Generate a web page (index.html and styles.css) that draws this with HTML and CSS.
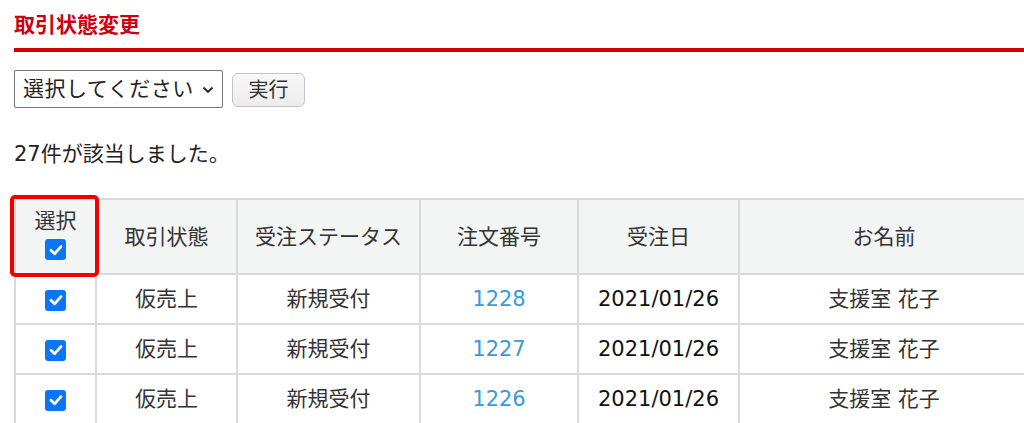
FILE: index.html
```html
<!DOCTYPE html>
<html lang="ja">
<head>
<meta charset="utf-8">
<link rel="stylesheet" href="styles.css">
</head>
<body>
<div class="page">
  <h2 class="title">取引状態変更</h2>
  <div class="actions">
    <div class="select"><span>選択してください</span><svg class="chev" width="12" height="8" viewBox="0 0 12 8"><path d="M1.5 1.5 L6 6 L10.5 1.5" fill="none" stroke="#222" stroke-width="1.8"/></svg></div>
    <button class="btn">実行</button>
  </div>
  <p class="count">27件が該当しました。</p>
  <div class="table-wrap">
    <table class="list">
      <colgroup>
        <col class="c1"><col class="c2"><col class="c3"><col class="c4"><col class="c5"><col class="c6">
      </colgroup>
      <thead>
        <tr>
          <th class="sel"><div>選択</div><span class="cb"><svg viewBox="0 0 20 20" width="20" height="20"><path d="M5 10.3 L8.6 13.8 L15 6.6" fill="none" stroke="#fff" stroke-width="2.8" stroke-linecap="round" stroke-linejoin="round"/></svg></span></th>
          <th>取引状態</th>
          <th>受注ステータス</th>
          <th>注文番号</th>
          <th>受注日</th>
          <th>お名前</th>
        </tr>
      </thead>
      <tbody>
        <tr>
          <td><span class="cb"><svg viewBox="0 0 20 20" width="20" height="20"><path d="M5 10.3 L8.6 13.8 L15 6.6" fill="none" stroke="#fff" stroke-width="2.8" stroke-linecap="round" stroke-linejoin="round"/></svg></span></td>
          <td>仮売上</td><td>新規受付</td><td><a href="#">1228</a></td><td class="date">2021/01/26</td><td>支援室 花子</td>
        </tr>
        <tr>
          <td><span class="cb"><svg viewBox="0 0 20 20" width="20" height="20"><path d="M5 10.3 L8.6 13.8 L15 6.6" fill="none" stroke="#fff" stroke-width="2.8" stroke-linecap="round" stroke-linejoin="round"/></svg></span></td>
          <td>仮売上</td><td>新規受付</td><td><a href="#">1227</a></td><td class="date">2021/01/26</td><td>支援室 花子</td>
        </tr>
        <tr>
          <td><span class="cb"><svg viewBox="0 0 20 20" width="20" height="20"><path d="M5 10.3 L8.6 13.8 L15 6.6" fill="none" stroke="#fff" stroke-width="2.8" stroke-linecap="round" stroke-linejoin="round"/></svg></span></td>
          <td>仮売上</td><td>新規受付</td><td><a href="#">1226</a></td><td class="date">2021/01/26</td><td>支援室 花子</td>
        </tr>
      </tbody>
    </table>
    <div class="highlight"></div>
  </div>
</div>
</body>
</html>
```
FILE: styles.css
```css
* { box-sizing: border-box; }
html, body { margin: 0; padding: 0; background: #fff; overflow: hidden; }
body {
  font-family: "DejaVu Sans", "Noto Sans CJK JP", sans-serif;
  color: #333;
  font-size: 21px;
}
.page { padding: 0 0 0 14px; width: 1040px; }
.title {
  margin: 0;
  padding-top: 11px;
  font-size: 21px;
  font-weight: bold;
  line-height: 28px;
  color: #cc0010;
  border-bottom: 4px solid #d40000;
  height: 52px;
}
.actions {
  display: flex;
  align-items: center;
  gap: 9px;
  margin-top: 18px;
}
.select {
  width: 209px;
  height: 38px;
  border: 1px solid #767676;
  border-radius: 2px;
  display: flex;
  align-items: center;
  justify-content: space-between;
  padding: 0 8px 0 8px;
  font-size: 21px;
  line-height: 36px;
  color: #222;
}
.select span { letter-spacing: 0.5px; }
.chev { margin-top: 2px; flex: none; }
.btn {
  width: 73px;
  height: 34px;
  border: 1px solid #c3c3cc;
  border-radius: 6px;
  background: linear-gradient(#f8f8f8, #ececec);
  font-family: inherit;
  font-size: 20px;
  line-height: 30px;
  color: #333;
  padding: 0;
  margin-top: 1px;
}
.count {
  margin: 29px 0 0;
  line-height: 34px;
  font-size: 21px;
  color: #222;
}
.table-wrap { position: relative; margin-top: 27px; }
.list {
  border-collapse: collapse;
  table-layout: fixed;
  width: 1014px;
}
.c1 { width: 81px; }
.c2 { width: 141px; }
.c3 { width: 183px; }
.c4 { width: 158px; }
.c5 { width: 161px; }
.c6 { width: 290px; }
.list th, .list td {
  border: 2px solid #dadada;
  text-align: center;
  font-weight: normal;
  padding: 0;
  font-size: 21px;
  line-height: 28px;
}
.list th {
  background: #f3f4f4;
  height: 75px;
  color: #333;
}
.list td { height: 50px; color: #333; }
.list td.date { color: #111; }
.list a { color: #3a9ad9; text-decoration: none; }
.sel div { line-height: 26px; margin-top: -4px; }
.cb {
  display: inline-block;
  width: 21px;
  height: 21px;
  background: #0a76f6;
  border-radius: 3px;
  vertical-align: middle;
  position: relative;
}
.cb svg { display: block; margin: 0.5px; }
.sel .cb { margin-top: 2px; }
.highlight {
  position: absolute;
  left: -4px;
  top: -3px;
  width: 89px;
  height: 82px;
  border: 4px solid #f00000;
  border-radius: 5px;
  pointer-events: none;
}
```
